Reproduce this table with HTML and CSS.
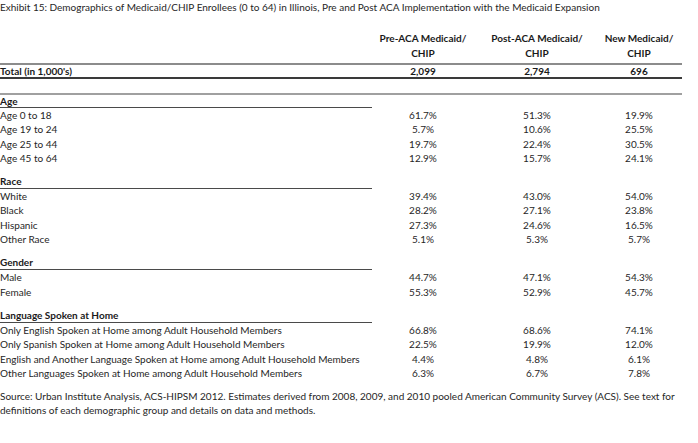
FILE: index.html
```html
<!DOCTYPE html>
<html>
<head>
<meta charset="utf-8">
<link rel="stylesheet" href="styles.css">
</head>
<body>
<div class="title">Exhibit 15: Demographics of Medicaid/CHIP Enrollees (0 to 64) in Illinois, Pre and Post ACA Implementation with the Medicaid Expansion</div>
<table class="tbl">
  <colgroup>
    <col class="c-label">
    <col class="c-pre">
    <col class="c-post">
    <col class="c-new">
  </colgroup>
  <thead>
    <tr class="head">
      <th></th>
      <th>Pre-ACA Medicaid/<br>CHIP</th>
      <th>Post-ACA Medicaid/<br>CHIP</th>
      <th class="last">New Medicaid/<br>CHIP</th>
    </tr>
  </thead>
  <tbody>
    <tr class="total">
      <td>Total (in 1,000's)</td><td>2,099</td><td>2,794</td><td class="last">696</td>
    </tr>
    <tr class="blank"><td></td><td></td><td></td><td></td></tr>
    <tr class="sec first"><td>Age</td><td></td><td></td><td></td></tr>
    <tr class="row"><td>Age 0 to 18</td><td>61.7%</td><td>51.3%</td><td class="last">19.9%</td></tr>
    <tr class="row"><td>Age 19 to 24</td><td>5.7%</td><td>10.6%</td><td class="last">25.5%</td></tr>
    <tr class="row"><td>Age 25 to 44</td><td>19.7%</td><td>22.4%</td><td class="last">30.5%</td></tr>
    <tr class="row"><td>Age 45 to 64</td><td>12.9%</td><td>15.7%</td><td class="last">24.1%</td></tr>
    <tr class="sec"><td>Race</td><td></td><td></td><td></td></tr>
    <tr class="row"><td>White</td><td>39.4%</td><td>43.0%</td><td class="last">54.0%</td></tr>
    <tr class="row"><td>Black</td><td>28.2%</td><td>27.1%</td><td class="last">23.8%</td></tr>
    <tr class="row"><td>Hispanic</td><td>27.3%</td><td>24.6%</td><td class="last">16.5%</td></tr>
    <tr class="row"><td>Other Race</td><td>5.1%</td><td>5.3%</td><td class="last">5.7%</td></tr>
    <tr class="sec"><td>Gender</td><td></td><td></td><td></td></tr>
    <tr class="row"><td>Male</td><td>44.7%</td><td>47.1%</td><td class="last">54.3%</td></tr>
    <tr class="row"><td>Female</td><td>55.3%</td><td>52.9%</td><td class="last">45.7%</td></tr>
    <tr class="sec"><td>Language Spoken at Home</td><td></td><td></td><td></td></tr>
    <tr class="row"><td>Only English Spoken at Home among Adult Household Members</td><td>66.8%</td><td>68.6%</td><td class="last">74.1%</td></tr>
    <tr class="row"><td>Only Spanish Spoken at Home among Adult Household Members</td><td>22.5%</td><td>19.9%</td><td class="last">12.0%</td></tr>
    <tr class="row"><td>English and Another Language Spoken at Home among Adult Household Members</td><td>4.4%</td><td>4.8%</td><td class="last">6.1%</td></tr>
    <tr class="row"><td>Other Languages Spoken at Home among Adult Household Members</td><td>6.3%</td><td>6.7%</td><td class="last">7.8%</td></tr>
  </tbody>
</table>
<p class="source">Source: Urban Institute Analysis, ACS-HIPSM 2012. Estimates derived from 2008, 2009, and 2010 pooled American Community Survey (ACS). See text for<br>definitions of each demographic group and details on data and methods.</p>
</body>
</html>
```
FILE: styles.css
```css
html, body {
  margin: 0;
  padding: 0;
  background: #ffffff;
}
body {
  font-family: Lato, "Open Sans", sans-serif;
  font-size: 10px;
  color: #262626;
}
.title {
  line-height: 14px;
  height: 14px;
  white-space: nowrap;
}
.tbl {
  border-collapse: collapse;
  table-layout: fixed;
  width: 682px;
  margin-top: 17px;
}
.c-label { width: 372px; }
.c-pre { width: 102px; }
.c-post { width: 126px; }
.c-new { width: 82px; }
.tbl th,
.tbl td {
  padding: 0;
  text-align: center;
  white-space: nowrap;
}
.tbl td:first-child {
  text-align: left;
}
.tbl .last {
  padding-right: 4px;
}
.head th {
  font-weight: bold;
  color: #1a1a1a;
  line-height: 14.5px;
  padding-bottom: 3px;
  vertical-align: bottom;
  border-bottom: 2px solid #8c8c8c;
}
.head th.last {
  padding-right: 4px;
}
.total td {
  font-weight: bold;
  color: #1a1a1a;
  line-height: 12px;
  border-bottom: 2px solid #3a3a3a;
}
.blank td {
  height: 14px;
  border-bottom: 2px solid #a0a0a0;
}
.sec td {
  font-weight: bold;
  color: #1a1a1a;
  line-height: 14px;
  padding-top: 9px;
}
.sec.first td {
  line-height: 12px;
  padding-top: 0;
}
.sec td:first-child {
  border-bottom: 1px solid #4a4a4a;
}
.row td {
  line-height: 14.3px;
}
.source {
  margin: 9px 0 0;
  line-height: 14px;
  white-space: nowrap;
}
```
